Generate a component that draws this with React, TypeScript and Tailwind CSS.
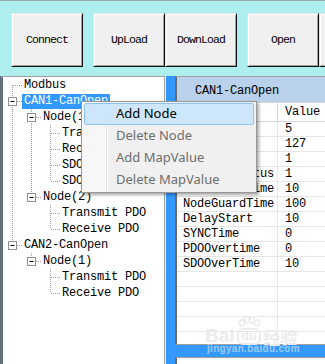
import React from 'react';

const mono = "font-['Liberation_Mono',monospace] text-[12px] tracking-[-0.2px]";

type TreeRow = {
  label: string;
  level: number;
  guides: boolean[];
  first?: boolean;
  last: boolean;
  expander: boolean;
  selected?: boolean;
};

const treeRows: TreeRow[] = [
  { label: 'Modbus', level: 0, guides: [], first: true, last: false, expander: false },
  { label: 'CAN1-CanOpen', level: 0, guides: [], last: false, expander: true, selected: true },
  { label: 'Node(1)', level: 1, guides: [true], last: false, expander: true },
  { label: 'Transmit PDO', level: 2, guides: [true, true], last: false, expander: false },
  { label: 'Receive PDO', level: 2, guides: [true, true], last: false, expander: false },
  { label: 'SDO Server', level: 2, guides: [true, true], last: false, expander: false },
  { label: 'SDO Client', level: 2, guides: [true, true], last: true, expander: false },
  { label: 'Node(2)', level: 1, guides: [true], last: true, expander: true },
  { label: 'Transmit PDO', level: 2, guides: [true, false], last: false, expander: false },
  { label: 'Receive PDO', level: 2, guides: [true, false], last: true, expander: false },
  { label: 'CAN2-CanOpen', level: 0, guides: [], last: true, expander: true },
  { label: 'Node(1)', level: 1, guides: [false], last: true, expander: true },
  { label: 'Transmit PDO', level: 2, guides: [false, false], last: false, expander: false },
  { label: 'Receive PDO', level: 2, guides: [false, false], last: true, expander: false },
];

const params: [string, string][] = [
  ['NodeID', '5'],
  ['MaxNodeID', '127'],
  ['BaudRate', '1'],
  ['NMTNodeStatus', '1'],
  ['SlaveOverTime', '10'],
  ['NodeGuardTime', '100'],
  ['DelayStart', '10'],
  ['SYNCTime', '0'],
  ['PDOOvertime', '0'],
  ['SDOOverTime', '10'],
];

const dot = { stroke: '#a0a0a0', strokeDasharray: '1 1' };

// one 19px column of the tree's connector lines
const Cell = ({ up, down, branch, box }: { up?: boolean; down?: boolean; branch?: boolean; box?: boolean }) => (
  <svg width="19" height="16" className="block shrink-0">
    {up && <line x1="9.5" y1="0" x2="9.5" y2="8" {...dot} />}
    {down && <line x1="9.5" y1="8" x2="9.5" y2="16" {...dot} />}
    {branch && <line x1="10" y1="8.5" x2="19" y2="8.5" {...dot} />}
    {box && (
      <>
        <rect x="5.5" y="4.5" width="8" height="8" fill="#fff" stroke="#919191" />
        <line x1="7.5" y1="8.5" x2="11.5" y2="8.5" stroke="#000" />
      </>
    )}
  </svg>
);

const ToolButton = ({ label }: { label?: string }) => (
  <div className="flex h-[54px] w-[72px] shrink-0 items-center justify-center border border-t-[#e3e3e3] border-l-[#e3e3e3] border-r-[#111] border-b-[#111] bg-[#f0f0f0] shadow-[inset_1px_1px_0_#fff,inset_-1px_-1px_0_#a0a0a0] font-['Liberation_Mono',monospace] text-[11.5px] tracking-[-0.9px] text-black">
    {label}
  </div>
);

const menuItems = [
  { label: 'Add Node', enabled: true, hot: true },
  { label: 'Delete Node', enabled: false },
  { label: 'Add MapValue', enabled: false },
  { label: 'Delete MapValue', enabled: false },
];

export default function App() {
  return (
    <div className="relative flex h-[364px] w-[325px] flex-col overflow-hidden bg-white">
      {/* toolbar */}
      <div className="flex h-[76px] shrink-0 items-start border-t border-[#9aa8a8] bg-[#afeeee] pl-[11px] pt-[12px]">
        <ToolButton label="Connect" />
        <div className="ml-[10px] flex">
          <ToolButton label="UpLoad" />
          <ToolButton label="DownLoad" />
        </div>
        <div className="ml-[10px] flex">
          <ToolButton label="Open" />
          <ToolButton />
        </div>
      </div>

      <div className="flex min-h-0 flex-1">
        {/* tree */}
        <div className="w-[165px] shrink-0 border-t border-r border-t-[#a0a0a0] border-r-[#a0a0a0] border-l-[3px] border-l-[#66717d] bg-white">
          {treeRows.map((r, i) => (
            <div key={i} className="flex h-4 items-center">
              {r.guides.map((g, j) => (
                <Cell key={j} up={g} down={g} />
              ))}
              <Cell up={!r.first} down={!r.last} branch box={r.expander} />
              <span
                className={`flex h-[15px] items-center whitespace-nowrap px-[2px] ${mono} ${
                  r.selected ? 'bg-[#3399ff] text-white' : 'text-black'
                }`}
              >
                {r.label}
              </span>
            </div>
          ))}
        </div>

        {/* right side on blue */}
        <div className="flex min-w-0 flex-1 flex-col border-l border-l-[#eef2f6] bg-[#3399ff] pl-[9px]">
          <div className="flex h-[269px] shrink-0 flex-col overflow-hidden border-t border-b border-l-2 border-t-[#a0a0a0] border-b-[#a0a0a0] border-l-[#6b6b6b] bg-white">
            <div className={`flex h-[25px] shrink-0 items-center bg-[#b9d1ea] pl-[18px] pt-[2px] ${mono} text-black`}>
              CAN1-CanOpen
            </div>
            <div className={`flex h-[20px] shrink-0 border-t border-b border-[#d5d5d5] ${mono} text-black`}>
              <div className="flex w-[101px] shrink-0 items-center border-r border-[#d5d5d5] pl-[6px]">Name</div>
              <div className="flex items-center pl-[7px]">Value</div>
            </div>
            {[...params, ...Array.from({ length: 8 }, () => ['', ''] as [string, string])].map(([k, v], i) => (
              <div key={i} className={`flex h-[15px] shrink-0 border-b border-[#e6e6e6] ${mono} text-black`}>
                <div className="flex w-[101px] shrink-0 items-center overflow-hidden whitespace-nowrap border-r border-[#e6e6e6] pl-[6px]">
                  {k}
                </div>
                <div className="flex items-center pl-[7px]">{v}</div>
              </div>
            ))}
          </div>
          <div className="mt-[12px] flex-1 border-t border-l-2 border-t-[#a0a0a0] border-l-[#6b6b6b] bg-white" />
        </div>
      </div>

      {/* context menu */}
      <div className="absolute left-[81px] top-[101px] w-[176px] border border-[#979797] bg-[linear-gradient(to_right,#f7f7f7_0,#f7f7f7_24px,#e2e3e3_24px,#e2e3e3_25px,#fff_25px,#fff_26px,#f0f0f0_26px)] px-[2px] py-px shadow-[2px_2px_3px_rgba(0,0,0,0.35)]">
        {menuItems.map((m) => (
          <div
            key={m.label}
            className={`flex h-[22px] items-center rounded-[2px] border pl-[31px] font-['Noto_Sans',sans-serif] text-[13px] ${
              m.hot ? 'border-[#8ec3f0] bg-[#cde6fa]' : 'border-transparent'
            } ${m.enabled ? 'text-black' : 'text-[#6d6d6d]'}`}
          >
            {m.label}
          </div>
        ))}
      </div>

      {/* watermark */}
      <div className="pointer-events-none absolute left-[205px] top-[316px] flex items-end gap-[2px] text-[#ececec]">
        <span className="font-['Liberation_Sans',sans-serif] text-[19px] font-bold leading-none">Bai</span>
        <span className="flex flex-col items-center">
          <svg width="22" height="12" viewBox="0 0 22 12">
            <g fill="none" stroke="#ececec" strokeWidth="1.5">
              <ellipse cx="4" cy="7" rx="2.5" ry="3" />
              <ellipse cx="9" cy="4" rx="2.5" ry="3" />
              <ellipse cx="14" cy="4" rx="2.5" ry="3" />
              <ellipse cx="19" cy="7" rx="2.5" ry="3" />
            </g>
          </svg>
          <span className="rounded-[6px] border-2 border-[#ececec] px-[3px] font-['Liberation_Sans',sans-serif] text-[12px] font-bold leading-[13px]">
            du
          </span>
        </span>
        <span className="font-['Noto_Sans_CJK_SC',sans-serif] text-[17px] font-bold leading-none">经验</span>
      </div>
      <div className="pointer-events-none absolute left-[207px] top-[341px] font-['Liberation_Sans',sans-serif] text-[10px] font-bold tracking-[0.3px] text-white/50">
        jingyan.baidu.com
      </div>
    </div>
  );
}
